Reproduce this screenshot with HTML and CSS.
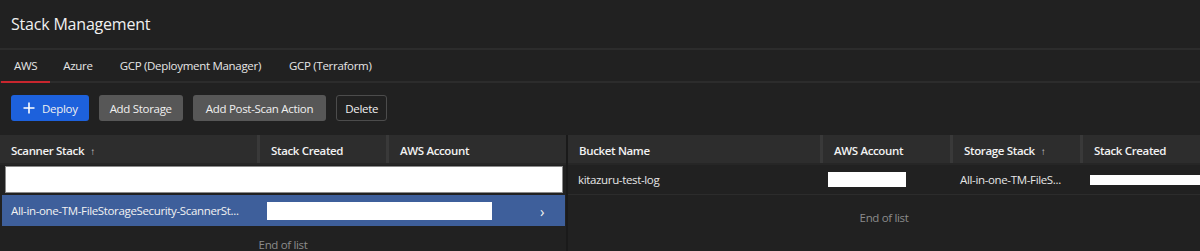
FILE: index.html
```html
<!DOCTYPE html>
<html lang="en">
<head>
    <meta charset="UTF-8">
    <meta name="viewport" content="width=device-width, initial-scale=1.0">
    <title>Stack Management</title>
    <link rel="stylesheet" href="styles.css">
</head>
<body>
    <div class="page-title">Stack Management</div>

    <div class="tabs">
        <div class="tab active">AWS</div>
        <div class="tab">Azure</div>
        <div class="tab">GCP (Deployment Manager)</div>
        <div class="tab">GCP (Terraform)</div>
    </div>

    <div class="toolbar">
        <button class="btn btn-primary">
            <svg width="12" height="12" viewBox="0 0 12 12"><path d="M6 0.5v11M0.5 6h11" stroke="#fff" stroke-width="1.6"/></svg>
            Deploy
        </button>
        <button class="btn btn-gray">Add Storage</button>
        <button class="btn btn-gray">Add Post-Scan Action</button>
        <button class="btn btn-outline">Delete</button>
    </div>

    <div class="tables">
        <div class="table scanner-table">
            <div class="thead">
                <div class="th">Scanner Stack <span class="sort">↑</span></div>
                <div class="th">Stack Created</div>
                <div class="th">AWS Account</div>
            </div>
            <div class="row row-blank"></div>
            <div class="row row-selected">
                <div class="td">All-in-one-TM-FileStorageSecurity-ScannerSt...</div>
                <div class="td td-wide"><span class="redact redact-lg"></span></div>
                <div class="td td-chevron">›</div>
            </div>
            <div class="end-of-list">End of list</div>
        </div>

        <div class="table storage-table">
            <div class="thead">
                <div class="th">Bucket Name</div>
                <div class="th">AWS Account</div>
                <div class="th">Storage Stack <span class="sort">↑</span></div>
                <div class="th">Stack Created</div>
            </div>
            <div class="row">
                <div class="td">kitazuru-test-log</div>
                <div class="td"><span class="redact redact-sm"></span></div>
                <div class="td">All-in-one-TM-FileS...</div>
                <div class="td"><span class="redact redact-thin"></span></div>
            </div>
            <div class="end-of-list">End of list</div>
        </div>
    </div>
</body>
</html>
```

FILE: styles.css
```css
body {
    margin: 0;
    background-color: #212121;
    color: #e6e6e6;
    font-family: "Open Sans", "Noto Sans", sans-serif;
    font-size: 11.5px;
    overflow: hidden;
}

.page-title {
    height: 48px;
    padding-left: 11px;
    display: flex;
    align-items: center;
    font-size: 16px;
    color: #f0f0f0;
    border-bottom: 2px solid #2c2c2c;
    letter-spacing: -0.2px;
}

.tabs {
    display: flex;
    height: 31px;
    border-bottom: 2px solid #2c2c2c;
    padding-left: 1px;
}

.tab {
    padding: 0 13px;
    display: flex;
    align-items: center;
    color: #e6e6e6;
    border-bottom: 2px solid transparent;
    margin-bottom: -2px;
    letter-spacing: -0.3px;
}

.tab:nth-child(n+3) {
    padding: 0 14px;
}

.tab.active {
    border-bottom-color: #c8262e;
}

.toolbar {
    display: flex;
    gap: 10px;
    padding: 12px 11px 14px;
}

.btn {
    height: 26px;
    border-radius: 3px;
    border: 1px solid transparent;
    font-family: inherit;
    font-size: 11.5px;
    color: #f0f0f0;
    padding: 0 10px;
    display: flex;
    align-items: center;
    gap: 7px;
    letter-spacing: -0.3px;
}

.btn-primary {
    background-color: #1d61dc;
    padding-left: 11px;
    padding-right: 10px;
}

.btn-gray {
    background-color: #575757;
}

.btn-gray:nth-child(3) {
    padding: 0 12px;
}

.btn-outline {
    background: transparent;
    border-color: #4c4c4c;
    padding: 0 8px;
}

.tables {
    display: grid;
    grid-template-columns: 566px 1fr;
    gap: 2px;
    background-color: #1a1a1a;
}

.table {
    background-color: #212121;
}

.thead {
    display: grid;
    height: 28px;
    background-color: #2d2d2d;
    border-bottom: 2px solid #262626;
}

.scanner-table .thead {
    grid-template-columns: 257px 129px 1fr;
}

.storage-table .thead,
.storage-table .row {
    grid-template-columns: 252px 130px 130px 1fr;
}

.th {
    display: flex;
    align-items: center;
    padding-left: 11px;
    padding-top: 3px;
    font-weight: 600;
    color: #f2f2f2;
    letter-spacing: -0.35px;
    border-left: 3px solid #393939;
}

.th:first-child {
    border-left: none;
}

.sort {
    font-size: 10px;
    margin-left: 6px;
    color: #cfcfcf;
}

.row {
    display: grid;
    height: 29px;
    border-bottom: 1px solid #2c2c2c;
}

.td {
    display: flex;
    align-items: center;
    padding-left: 11px;
    white-space: nowrap;
    overflow: hidden;
    letter-spacing: -0.35px;
}

.storage-table .td {
    padding-left: 10px;
}

.storage-table .td:nth-child(2) {
    padding-left: 8px;
}

.row-blank {
    height: 25px;
    margin: 1px 3px 2px 5px;
    background-color: #ffffff;
    border: 1px solid #8a8a8a;
}

.row-selected {
    grid-template-columns: 265px 1fr 25px;
    height: 31px;
    margin: 0 1px 0 2px;
    background-color: #3e5f9b;
    border-bottom: none;
    color: #f2f2f2;
}

.row-selected .td:first-child {
    padding-left: 9px;
}

.td-wide {
    padding-left: 0;
}

.td-chevron {
    font-size: 15px;
    padding-left: 0;
}

.redact {
    display: block;
    background-color: #ffffff;
}

.redact-lg {
    width: 225px;
    height: 18px;
}

.redact-sm {
    width: 78px;
    height: 15px;
}

.redact-thin {
    width: 110px;
    height: 10px;
}

.end-of-list {
    height: 44px;
    display: flex;
    align-items: center;
    justify-content: center;
    color: #8c8c8c;
    letter-spacing: -0.35px;
}

.scanner-table .end-of-list {
    height: 36px;
}
```
